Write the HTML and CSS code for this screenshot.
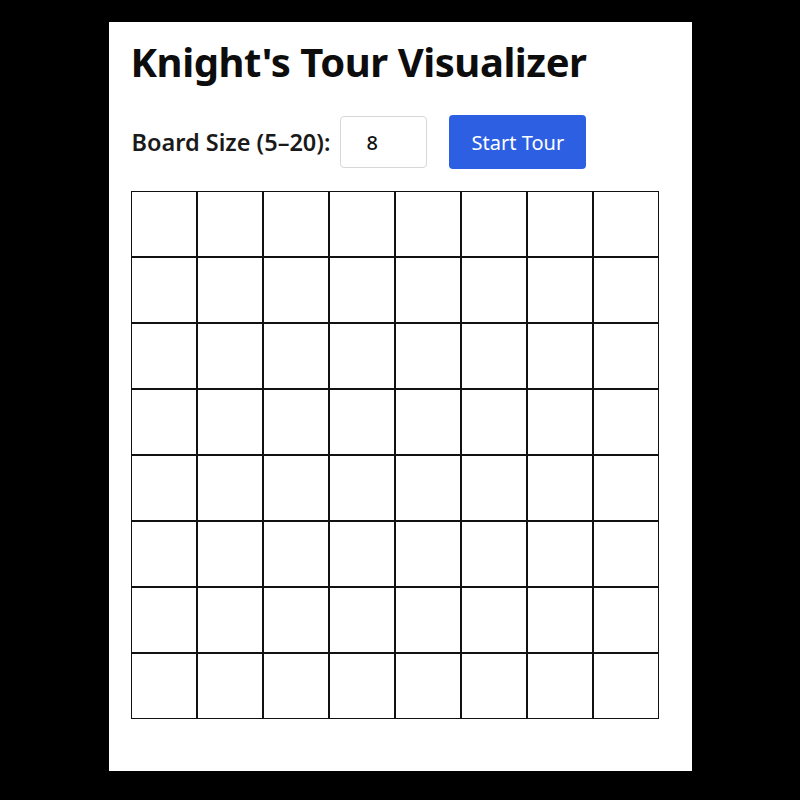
FILE: index.html
```html
<!DOCTYPE html>
<html lang="en">
<head>
<meta charset="utf-8">
<title>Knight's Tour Visualizer</title>
<link rel="stylesheet" href="styles.css">
</head>
<body>
<main class="panel">
  <h1 class="title">Knight's Tour Visualizer</h1>
  <div class="controls">
    <label class="label" for="size">Board Size (5–20):</label>
    <input class="size-input" id="size" type="text" value="8">
    <button class="start-btn" type="button">Start Tour</button>
  </div>
  <div class="board" id="board"></div>
</main>
<script>
  var board = document.getElementById('board');
  for (var i = 0; i < 64; i++) {
    var c = document.createElement('div');
    c.className = 'cell';
    board.appendChild(c);
  }
</script>
</body>
</html>
```

FILE: styles.css
```css
html, body {
  margin: 0;
  padding: 0;
  background: #000;
}
body {
  display: flex;
  justify-content: center;
  padding-top: 22px;
  font-family: "Noto Sans", "Open Sans", sans-serif;
  color: #111;
}
.panel {
  background: #fff;
  width: 583px;
  height: 749px;
  box-sizing: border-box;
  padding: 17px 22px 20px 22px;
}
.title {
  margin: 0;
  font-size: 40px;
  font-weight: 700;
  line-height: 46px;
  letter-spacing: -0.45px;
  color: #0d0d0d;
}
.controls {
  display: flex;
  align-items: center;
  margin-top: 30px;
}
.label {
  font-size: 23.5px;
  font-weight: 600;
  margin-right: 10px;
  margin-left: 1px;
  color: #1a1a1a;
}
.size-input {
  width: 87px;
  height: 52px;
  box-sizing: border-box;
  border: 1px solid #d8d8d8;
  border-radius: 4px;
  font-family: inherit;
  font-size: 20px;
  font-weight: 500;
  padding: 0 0 0 25px;
  color: #111;
  margin-right: 22px;
}
.start-btn {
  width: 137px;
  height: 54px;
  border: none;
  border-radius: 4px;
  background: #2d5fe3;
  color: #fff;
  font-family: inherit;
  font-size: 20px;
  font-weight: 400;
}
.board {
  margin-top: 22px;
  display: grid;
  grid-template-columns: repeat(8, 66px);
  grid-auto-rows: 66px;
  width: 528px;
}
.cell {
  border: 1px solid #111;
}
```
